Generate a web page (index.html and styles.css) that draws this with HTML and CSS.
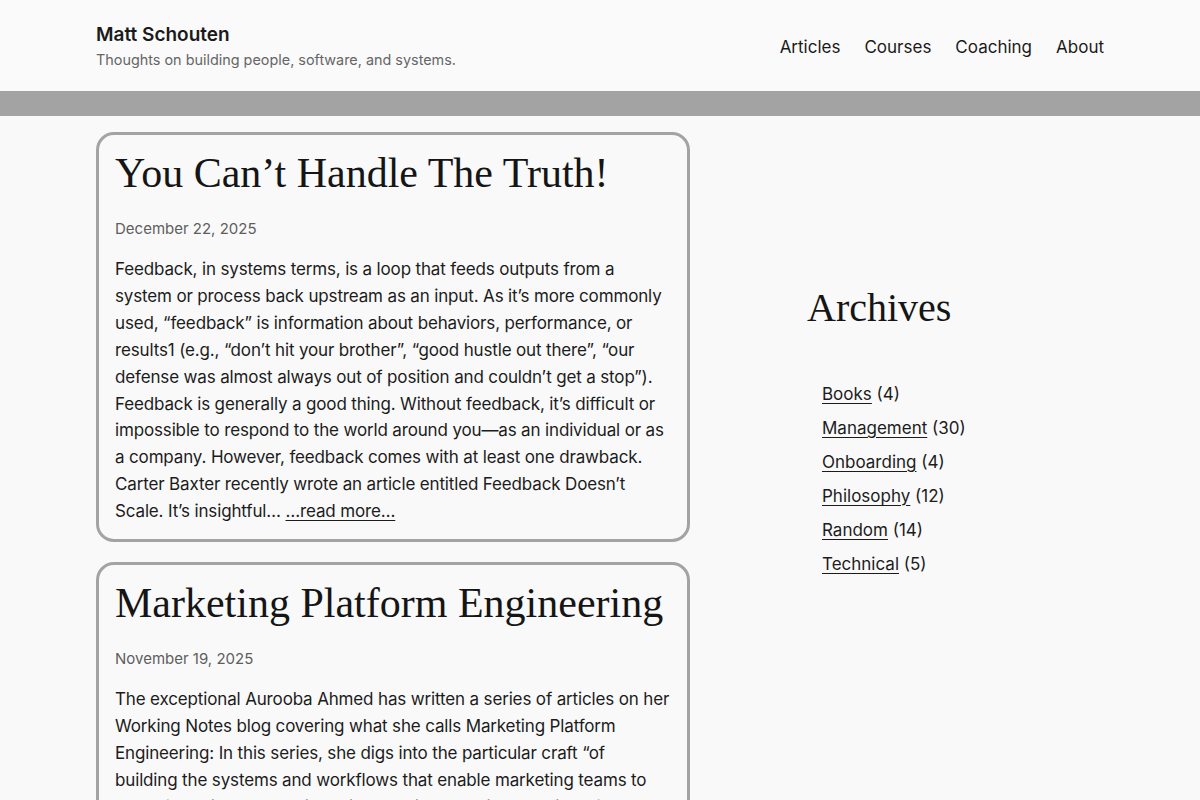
FILE: index.html
```html
<!DOCTYPE html>
<html lang="en">
<head>
<meta charset="utf-8">
<title>Matt Schouten</title>
<link rel="stylesheet" href="styles.css">
</head>
<body>
<header class="site-header">
  <div class="wrap header-inner">
    <div class="brand">
      <a class="site-title" href="#">Matt Schouten</a>
      <p class="tagline">Thoughts on building people, software, and systems.</p>
    </div>
    <nav class="nav">
      <a href="#">Articles</a>
      <a href="#">Courses</a>
      <a href="#">Coaching</a>
      <a href="#">About</a>
    </nav>
  </div>
</header>
<div class="band"></div>
<div class="wrap layout">
  <main class="posts">
    <article class="card">
      <h2 class="post-title">You Can’t Handle The Truth!</h2>
      <p class="date">December 22, 2025</p>
      <p class="excerpt">Feedback, in systems terms, is a loop that feeds outputs from a system or process back upstream as an input. As it’s more commonly used, “feedback” is information about behaviors, performance, or results1 (e.g., “don’t hit your brother”, “good hustle out there”, “our defense was almost always out of position and couldn’t get a stop”). Feedback is generally a good thing. Without feedback, it’s difficult or impossible to respond to the world around you—as an individual or as a company. However, feedback comes with at least one drawback. Carter Baxter recently wrote an article entitled Feedback Doesn’t Scale. It’s insightful… <a href="#">…read more…</a></p>
    </article>
    <article class="card">
      <h2 class="post-title">Marketing Platform Engineering</h2>
      <p class="date">November 19, 2025</p>
      <p class="excerpt">The exceptional Aurooba Ahmed has written a series of articles on her Working Notes blog covering what she calls Marketing Platform Engineering: In this series, she digs into the particular craft “of building the systems and workflows that enable marketing teams to move fast without breaking things. It sits at the intersection of web development, operations, and marketing strategy… <a href="#">…read more…</a></p>
    </article>
  </main>
  <aside class="sidebar">
    <h2 class="widget-title">Archives</h2>
    <ul class="cats">
      <li><a href="#">Books</a> (4)</li>
      <li><a href="#">Management</a> (30)</li>
      <li><a href="#">Onboarding</a> (4)</li>
      <li><a href="#">Philosophy</a> (12)</li>
      <li><a href="#">Random</a> (14)</li>
      <li><a href="#">Technical</a> (5)</li>
    </ul>
  </aside>
</div>
</body>
</html>
```

FILE: styles.css
```css
html, body {
  margin: 0;
  padding: 0;
}

body {
  background: #f9f9f9;
  color: #1c1c1c;
  font-family: Inter, "Noto Sans", sans-serif;
  font-size: 17px;
  overflow: hidden;
}

a {
  color: inherit;
}

.wrap {
  width: 1008px;
  margin: 0 auto;
}

/* header */
.site-header {
  background: #fafafa;
  height: 91px;
}

.header-inner {
  display: flex;
  justify-content: space-between;
  align-items: center;
  height: 100%;
}

.brand {
  padding-top: 2px;
}

.site-title {
  display: block;
  font-size: 19px;
  font-weight: 600;
  text-decoration: none;
  color: #1a1a1a;
  line-height: 24px;
}

.tagline {
  margin: 3px 0 0;
  font-size: 14.4px;
  color: #666;
  line-height: 20px;
}

.nav {
  display: flex;
  gap: 24px;
  padding-top: 2px;
}

.nav a {
  text-decoration: none;
  color: #1a1a1a;
  font-size: 17px;
}

.band {
  height: 25px;
  background: #a3a3a3;
}

/* content */
.layout {
  display: grid;
  grid-template-columns: 594px 1fr;
  column-gap: 117px;
  padding-top: 16px;
}

.posts {
  display: flex;
  flex-direction: column;
  gap: 20px;
}

.card {
  border: 3px solid #a3a3a3;
  border-radius: 18px;
  padding: 12px 16px 14px;
}

.post-title {
  margin: 0;
  font-family: "Liberation Serif", "DejaVu Serif", serif;
  font-weight: 400;
  font-size: 42px;
  line-height: 52px;
  color: #151515;
}

.date {
  margin: 20px 0 0;
  font-size: 15px;
  color: #5e5e5e;
  line-height: 20px;
}

.excerpt {
  margin: 17px 0 0;
  line-height: 26.9px;
  letter-spacing: -0.15px;
  color: #1c1c1c;
}

.excerpt a {
  text-decoration: underline;
  text-underline-offset: 3px;
}

/* sidebar */
.sidebar {
  padding-top: 150px;
}

.widget-title {
  margin: 0;
  font-family: "Liberation Serif", "DejaVu Serif", serif;
  font-weight: 400;
  font-size: 40px;
  line-height: 52px;
  color: #151515;
}

.cats {
  list-style: none;
  margin: 48px 0 0;
  padding: 0 0 0 15px;
  display: flex;
  flex-direction: column;
  gap: 10px;
}

.cats li {
  line-height: 24px;
}

.cats a {
  text-underline-offset: 3px;
}
```
